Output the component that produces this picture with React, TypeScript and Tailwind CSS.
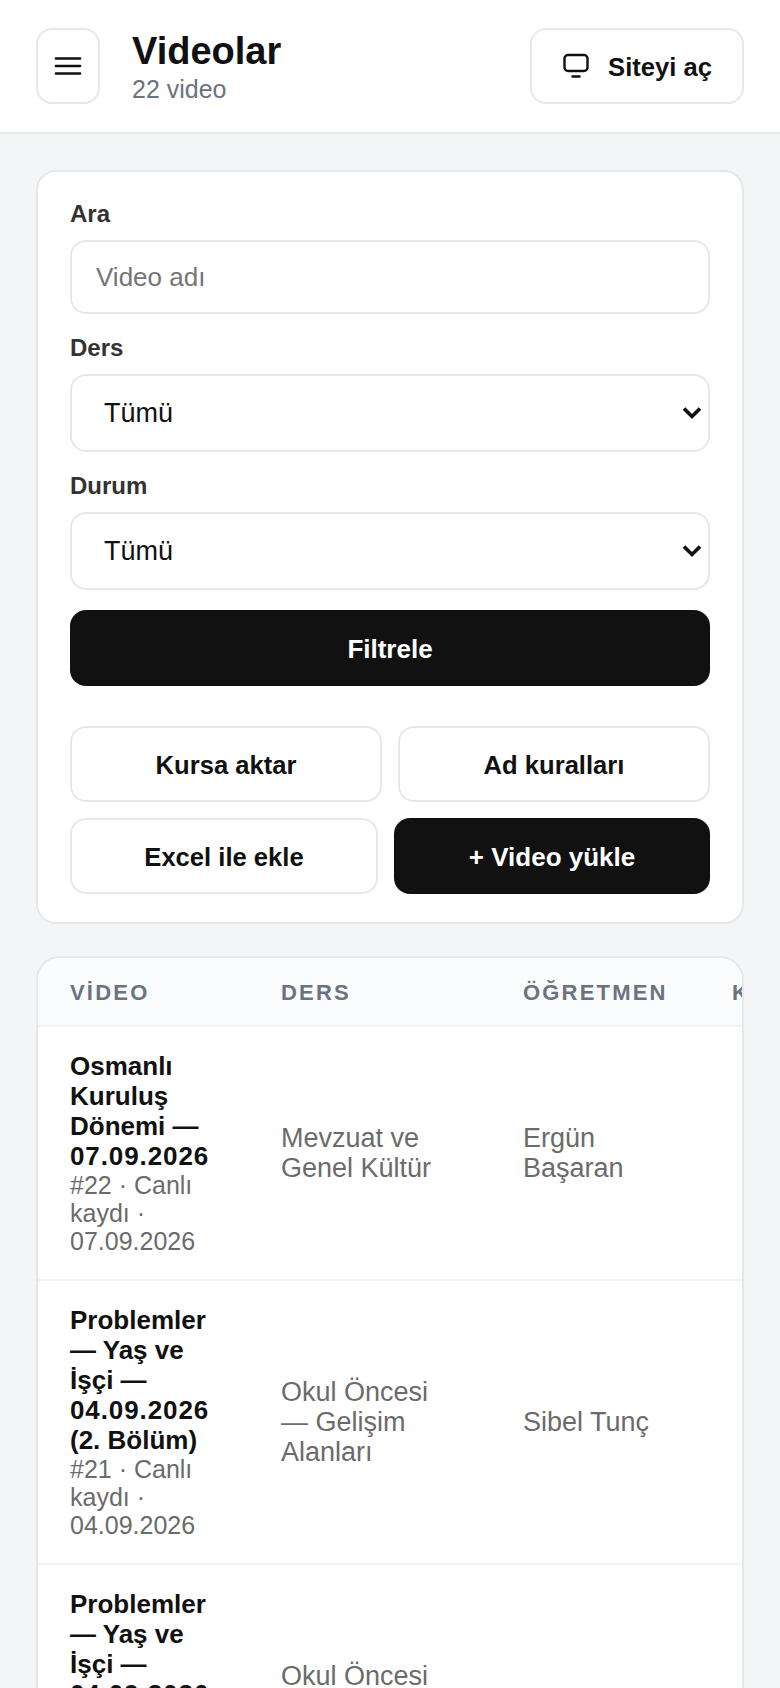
import React from "react";

function Field({ label, children, className = "" }: { label: string; children: React.ReactNode; className?: string }) {
  return (
    <div className={className}>
      <label className="block text-[24px] leading-[30px] font-bold text-[#333333] mb-[11px] pt-[1px]">{label}</label>
      {children}
    </div>
  );
}

function Select() {
  return (
    <div className="relative">
      <select className="block w-full h-[78px] appearance-none rounded-[16px] border-2 border-[#e5e7eb] bg-white pl-[32px] pr-[40px] text-[27px] text-[#111111]">
        <option>Tümü</option>
      </select>
      <svg className="absolute right-[7px] top-[32px] pointer-events-none" width="22" height="14" viewBox="0 0 22 14" fill="none" stroke="#111111" strokeWidth="3.6">
        <path d="M3 2.5l8 8 8-8" />
      </svg>
    </div>
  );
}

const ghost = "h-[76px] pt-[2px] rounded-[16px] border-2 border-[#e5e7eb] bg-white text-[25.6px] font-bold text-[#111111] flex items-center justify-center";
const solid = "h-[76px] pt-[2px] rounded-[16px] bg-[#111111] text-[26px] font-bold text-white flex items-center justify-center";
const th = "px-[32px] pt-[2px] text-[22px] font-bold tracking-[0.1em] text-[#6b7280]";

function Title({ before, date, after }: { before: string; date: string; after?: string }) {
  return (
    <div className="text-[26px] leading-[30px] font-bold">
      {before} <span className="tracking-[0.9px]">{date}</span>
      {after ? " " + after : ""}
    </div>
  );
}

const rows = [
  { before: "Osmanlı Kuruluş Dönemi —", date: "07.09.2026", after: "", sub: "#22 · Canlı kaydı · 07.09.2026", ders: "Mevzuat ve Genel Kültür", teacher: "Ergün Başaran" },
  { before: "Problemler — Yaş ve İşçi —", date: "04.09.2026", after: "(2. Bölüm)", sub: "#21 · Canlı kaydı · 04.09.2026", ders: "Okul Öncesi — Gelişim Alanları", teacher: "Sibel Tunç" },
  { before: "Problemler — Yaş ve İşçi —", date: "04.09.2026", after: "(1. Bölüm)", sub: "#20 · Canlı kaydı · 04.09.2026", ders: "Okul Öncesi — Gelişim Alanları", teacher: "Sibel Tunç" },
];

export default function App() {
  return (
    <div className="h-[1688px] overflow-hidden bg-[#f4f5f7] font-['Liberation_Sans',Arial,sans-serif] text-[#111111]">
      <header className="h-[134px] bg-white border-b-2 border-[#e5e7eb] px-[36px] flex items-center justify-between">
        <div className="flex items-center gap-[32px]">
          <button className="w-[64px] h-[76px] rounded-[16px] border-2 border-[#e5e7eb] bg-white flex items-center justify-center">
            <svg width="32" height="32" viewBox="0 0 32 32" fill="none" stroke="#111111" strokeWidth="2.7" strokeLinecap="round">
              <path d="M4 8.5h24M4 16h24M4 23.5h24" />
            </svg>
          </button>
          <div>
            <h1 className="text-[38px] leading-[44px] font-bold">Videolar</h1>
            <p className="text-[25px] leading-[30px] mt-[1px] text-[#6b7280]">22 video</p>
          </div>
        </div>
        <button className="h-[76px] w-[214px] pt-[2px] rounded-[16px] border-2 border-[#e5e7eb] bg-white flex items-center justify-center gap-[18px] text-[25.6px] font-bold">
          <svg className="-mt-[2px]" width="28" height="28" viewBox="0 0 28 28" fill="none" stroke="#111111" strokeWidth="2.4" strokeLinecap="round" strokeLinejoin="round">
            <rect x="2.5" y="3" width="23" height="16" rx="3.5" />
            <path d="M10.5 24.5h7" />
          </svg>
          Siteyi aç
        </button>
      </header>

      <main className="px-[36px] pt-[36px] flex flex-col gap-[32px]">
        <section className="rounded-[20px] border-2 border-[#e5e7eb] bg-white px-[32px] pt-[26px] pb-[28px]">
          <Field label="Ara">
            <input placeholder="Video adı" className="block w-full h-[74px] rounded-[16px] border-2 border-[#e5e7eb] bg-white px-[24px] text-[26px] placeholder:text-[#757575]" />
          </Field>
          <Field label="Ders" className="mt-[18px]">
            <Select />
          </Field>
          <Field label="Durum" className="mt-[18px]">
            <Select />
          </Field>
          <button className={solid + " w-full mt-[20px]"}>Filtrele</button>
          <div className="mt-[40px] flex flex-col gap-[16px]">
            <div className="flex gap-[16px]">
              <button className={ghost + " flex-1"}>Kursa aktar</button>
              <button className={ghost + " flex-1"}>Ad kuralları</button>
            </div>
            <div className="flex gap-[16px]">
              <button className={ghost + " w-[308px]"}>Excel ile ekle</button>
              <button className={solid + " flex-1"}>+ Video yükle</button>
            </div>
          </div>
        </section>

        <section className="rounded-[24px] border-2 border-[#e5e7eb] bg-white overflow-hidden">
          <table className="table-fixed w-[1000px] border-collapse text-left">
            <thead>
              <tr className="bg-[#fafbfc] border-b-2 border-[#f1f2f4]">
                <th className={"w-[211px] h-[68px] " + th}>VİDEO</th>
                <th className={"w-[242px] " + th}>DERS</th>
                <th className={"w-[209px] " + th}>ÖĞRETMEN</th>
                <th className={th}>KURS</th>
              </tr>
            </thead>
            <tbody>
              {rows.map((r) => (
                <tr key={r.sub} className="border-b-2 border-[#f1f2f4]">
                  <td className="px-[32px] py-[24px] align-middle">
                    <Title before={r.before} date={r.date} after={r.after} />
                    <div className="text-[25px] leading-[28px] text-[#6b6b6b]">{r.sub}</div>
                  </td>
                  <td className="pl-[32px] pr-[40px] py-[24px] align-middle text-[27px] leading-[30px] text-[#6b6b6b]">{r.ders}</td>
                  <td className="px-[32px] py-[24px] align-middle text-[27px] leading-[30px] text-[#6b6b6b]">{r.teacher}</td>
                  <td className="px-[32px] py-[24px]" />
                </tr>
              ))}
            </tbody>
          </table>
        </section>
      </main>
    </div>
  );
}
